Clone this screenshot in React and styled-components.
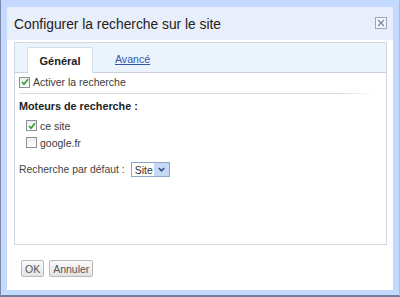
import React from 'react';
import styled, { createGlobalStyle } from 'styled-components';

const GlobalStyle = createGlobalStyle`
  html, body {
    margin: 0;
    padding: 0;
    background: #ffffff;
  }
  body {
    font-family: "Liberation Sans", Arial, sans-serif;
  }
`;

const Frame = styled.div`
  box-sizing: border-box;
  width: 400px;
  height: 297px;
  background: #c3d9ff;
  border-left: 1px solid #7d8aa6;
  border-right: 1px solid #a9bde2;
  border-bottom: 2px solid #6f7e9c;
  padding: 7px 6px 5px 6px;
  display: flex;
`;

const Dialog = styled.div`
  flex: 1;
  background: #ffffff;
  display: flex;
  flex-direction: column;
`;

const TitleBar = styled.div`
  height: 33px;
  background: #e8eefa;
  display: flex;
  align-items: center;
  justify-content: space-between;
  padding: 0 6px 0 7px;
`;

const Title = styled.div`
  font-size: 13.8px;
  color: #222222;
  margin-top: 1px;
`;

const CloseBox = styled.div`
  width: 10px;
  height: 10px;
  border: 1px solid #9aa6bd;
  background: #f3f6fc;
  display: flex;
  align-items: center;
  justify-content: center;
  margin-top: -2px;
`;

const Body = styled.div`
  flex: 1;
  display: flex;
  flex-direction: column;
  padding: 2px 6px 0 7px;
`;

const Panel = styled.div`
  height: 203px;
  box-sizing: border-box;
  border: 1px solid #d4d8de;
  display: flex;
  flex-direction: column;
`;

const TabStrip = styled.div`
  height: 30px;
  box-sizing: border-box;
  background: #ebf4fd;
  border-bottom: 1px solid #c9d3df;
  display: flex;
  align-items: flex-end;
  padding-left: 12px;
`;

const Tab = styled.div`
  width: 66px;
  height: 26px;
  box-sizing: border-box;
  background: #ffffff;
  border: 1px solid #d6dfea;
  border-bottom: none;
  margin-bottom: -1px;
  display: flex;
  align-items: center;
  justify-content: center;
  font-size: 11px;
  font-weight: bold;
  color: #222222;
`;

const TabLink = styled.a`
  margin-left: 22px;
  align-self: center;
  margin-top: 3px;
  font-size: 10.6px;
  color: #3355aa;
  text-decoration: underline;
`;

const Content = styled.div`
  display: flex;
  flex-direction: column;
  padding: 4px 10px 0 4px;
`;

const CheckRow = styled.label`
  display: flex;
  align-items: center;
  gap: 3px;
  height: ${(p) => p.h || 17}px;
  padding-left: ${(p) => p.indent || 0}px;
  font-size: 10.5px;
  color: #3a3a3a;
`;

const Box = styled.span`
  width: 9px;
  height: 9px;
  border: 1px solid #8a8f98;
  background: linear-gradient(#eeeeee, #ffffff);
  display: flex;
  align-items: center;
  justify-content: center;
`;

const Separator = styled.div`
  height: 1px;
  margin: 6px 0 0 0;
  background: linear-gradient(to right, #d6dce6 90%, #ffffff);
`;

const SectionTitle = styled.div`
  font-size: 10.8px;
  font-weight: bold;
  color: #222222;
  margin: 6px 0 5px 0;
`;

const SelectRow = styled.div`
  display: flex;
  align-items: center;
  margin-top: 11px;
  font-size: 10.4px;
  color: #444444;
  gap: 6px;
`;

const Select = styled.div`
  width: 39px;
  height: 15px;
  box-sizing: border-box;
  border: 1px solid #8ea4c8;
  background: #ffffff;
  display: flex;
  align-items: center;
  justify-content: space-between;
  padding-left: 3px;
  font-size: 10.5px;
  color: #333333;
`;

const SelectArrow = styled.span`
  width: 15px;
  height: 13px;
  background: #c7d8f6;
  display: flex;
  align-items: center;
  justify-content: center;
`;

const Footer = styled.div`
  display: flex;
  gap: 5px;
  padding: 15px 0 0 7px;
`;

const Button = styled.button`
  height: 17px;
  box-sizing: border-box;
  padding: 0 3px;
  border: 1px solid #b9b9b9;
  border-radius: 2px;
  background: linear-gradient(#fafafa, #e4e4e4);
  font-family: "Liberation Sans", Arial, sans-serif;
  font-size: 10.5px;
  color: #555555;
  min-width: ${(p) => p.w || 0}px;
`;

const Check = () => (
  <svg width="8" height="8" viewBox="0 0 8 8">
    <path d="M1 4 L3 6.2 L7 1.2" stroke="#2e9a2e" strokeWidth="1.6" fill="none" />
  </svg>
);

const Checkbox = ({ checked }) => <Box>{checked && <Check />}</Box>;

const App = () => (
  <>
    <GlobalStyle />
    <Frame>
      <Dialog>
        <TitleBar>
          <Title>Configurer la recherche sur le site</Title>
          <CloseBox>
            <svg width="8" height="8" viewBox="0 0 8 8">
              <path d="M1 1 L7 7 M7 1 L1 7" stroke="#7d8799" strokeWidth="1.3" />
            </svg>
          </CloseBox>
        </TitleBar>
        <Body>
          <Panel>
            <TabStrip>
              <Tab>Général</Tab>
              <TabLink>Avancé</TabLink>
            </TabStrip>
            <Content>
              <CheckRow h={10}>
                <Checkbox checked />
                Activer la recherche
              </CheckRow>
              <Separator />
              <SectionTitle>Moteurs de recherche :</SectionTitle>
              <CheckRow indent={7}>
                <Checkbox checked />
                ce site
              </CheckRow>
              <CheckRow indent={7}>
                <Checkbox />
                google.fr
              </CheckRow>
              <SelectRow>
                Recherche par défaut :
                <Select>
                  Site
                  <SelectArrow>
                    <svg width="7" height="5" viewBox="0 0 7 5">
                      <path d="M0.8 1 L3.5 3.8 L6.2 1" stroke="#2b4c8c" strokeWidth="1.5" fill="none" />
                    </svg>
                  </SelectArrow>
                </Select>
              </SelectRow>
            </Content>
          </Panel>
          <Footer>
            <Button w={22}>OK</Button>
            <Button w={43}>Annuler</Button>
          </Footer>
        </Body>
      </Dialog>
    </Frame>
  </>
);

export default App;
